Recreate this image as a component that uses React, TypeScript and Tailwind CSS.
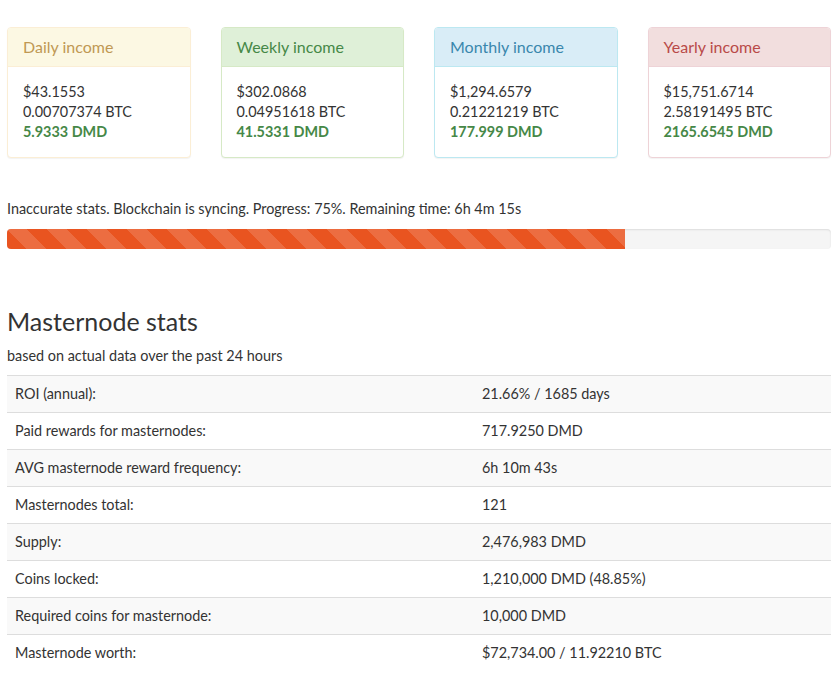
const cards = [
  {
    title: 'Daily income',
    usd: '$43.1553',
    btc: '0.00707374 BTC',
    dmd: '5.9333 DMD',
    border: 'border-[#fbeed5]',
    head: 'bg-[#fcf8e3] text-[#c09853] border-[#fbeed5]',
  },
  {
    title: 'Weekly income',
    usd: '$302.0868',
    btc: '0.04951618 BTC',
    dmd: '41.5331 DMD',
    border: 'border-[#d6e9c6]',
    head: 'bg-[#dff0d8] text-[#468847] border-[#d6e9c6]',
  },
  {
    title: 'Monthly income',
    usd: '$1,294.6579',
    btc: '0.21221219 BTC',
    dmd: '177.999 DMD',
    border: 'border-[#bce8f1]',
    head: 'bg-[#d9edf7] text-[#3a87ad] border-[#bce8f1]',
  },
  {
    title: 'Yearly income',
    usd: '$15,751.6714',
    btc: '2.58191495 BTC',
    dmd: '2165.6545 DMD',
    border: 'border-[#eed3d7]',
    head: 'bg-[#f2dede] text-[#b94a48] border-[#eed3d7]',
  },
];

const stats: [string, string][] = [
  ['ROI (annual):', '21.66% / 1685 days'],
  ['Paid rewards for masternodes:', '717.9250 DMD'],
  ['AVG masternode reward frequency:', '6h 10m 43s'],
  ['Masternodes total:', '121'],
  ['Supply:', '2,476,983 DMD'],
  ['Coins locked:', '1,210,000 DMD (48.85%)'],
  ['Required coins for masternode:', '10,000 DMD'],
  ['Masternode worth:', '$72,734.00 / 11.92210 BTC'],
];

const progress = 75;

export default function App() {
  return (
    <div className="min-h-[693px] bg-white font-['Lato','Liberation_Sans',sans-serif] text-[14.4px] leading-[20px] text-[#333]">
      <div className="w-[824px] ml-[7px] pt-[27px]">
        {/* Income panels */}
        <div className="grid grid-cols-4 gap-[30px]">
          {cards.map((c) => (
            <div
              key={c.title}
              className={`rounded-[4px] border bg-white shadow-[0_1px_1px_rgba(0,0,0,0.05)] ${c.border}`}
            >
              <div className={`h-[39px] rounded-t-[3px] border-b px-[15px] text-[16px] leading-[37px] ${c.head}`}>
                {c.title}
              </div>
              <div className="p-[15px]">
                <div>{c.usd}</div>
                <div>{c.btc}</div>
                <div className="font-bold text-[#468847]">{c.dmd}</div>
              </div>
            </div>
          ))}
        </div>

        {/* Sync status */}
        <p className="mt-[41px]">
          Inaccurate stats. Blockchain is syncing. Progress: 75%. Remaining time: 6h 4m 15s
        </p>
        <div className="mt-[10px] h-[20px] overflow-hidden rounded-[4px] bg-[#f5f5f5] shadow-[inset_0_1px_2px_rgba(0,0,0,0.1)]">
          <div
            className="h-full bg-[#e95420] bg-[linear-gradient(45deg,rgba(255,255,255,.15)_25%,transparent_25%,transparent_50%,rgba(255,255,255,.15)_50%,rgba(255,255,255,.15)_75%,transparent_75%,transparent)] bg-[length:40px_40px]"
            style={{ width: `${progress}%` }}
          />
        </div>

        {/* Masternode stats */}
        <h3 className="mt-[59px] text-[25px] leading-[26px] font-normal">Masternode stats</h3>
        <p className="mt-[12px]">based on actual data over the past 24 hours</p>
        <table className="mt-[9px] w-full border-collapse">
          <tbody>
            {stats.map(([label, value], i) => (
              <tr key={label} className={i % 2 === 0 ? 'bg-[#f9f9f9]' : ''}>
                <td className="w-[467px] border-t border-[#ddd] p-[8px]">{label}</td>
                <td className="border-t border-[#ddd] p-[8px]">{value}</td>
              </tr>
            ))}
          </tbody>
        </table>
      </div>
    </div>
  );
}
